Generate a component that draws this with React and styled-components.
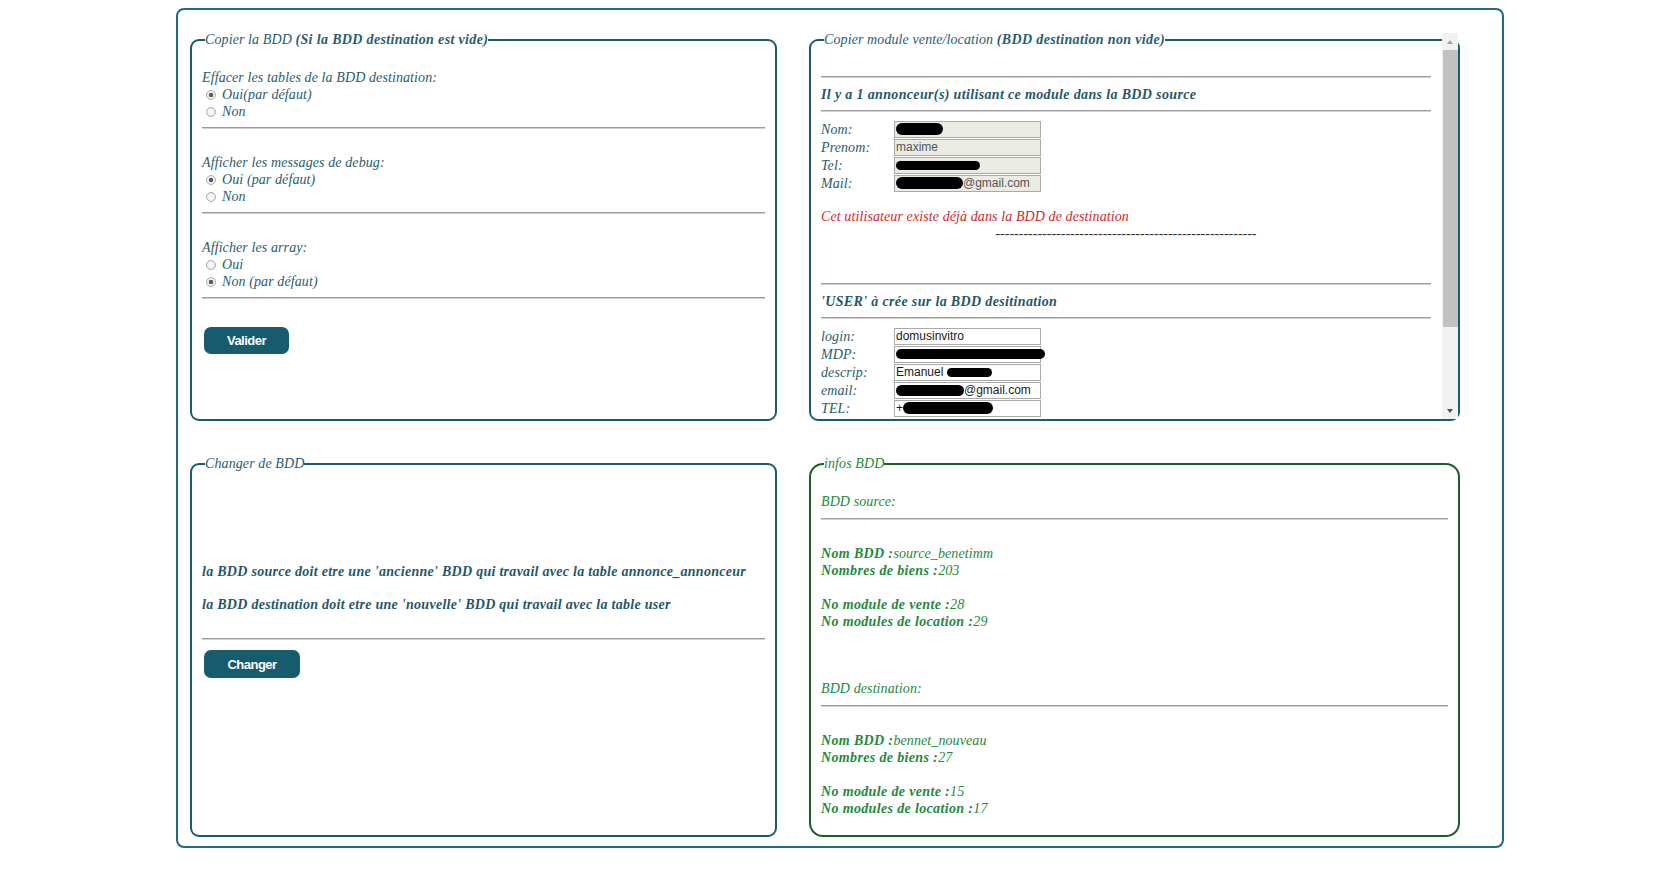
import styled, { createGlobalStyle } from "styled-components";

const GlobalStyle = createGlobalStyle`
  body {
    margin: 8px;
    background: #fff;
    font-family: "Liberation Serif", "Times New Roman", serif;
  }
`;

const Page = styled.div`
  box-sizing: border-box;
  width: 1328px;
  height: 840px;
  margin: 0 auto;
  padding: 22px 0 0 12px;
  border: 2px solid #1f6b7a;
  border-radius: 8px;
  display: grid;
  grid-template-columns: 587px 651px;
  grid-template-rows: 389px 381px;
  column-gap: 32px;
  row-gap: 35px;
`;

const Panel = styled.fieldset`
  box-sizing: border-box;
  min-width: 0;
  margin: 0;
  padding: ${(p) => (p.$flush ? "0 0 0 10px" : "21px 10px 0")};
  border: 2px solid ${(p) => (p.$green ? "#1c5e2a" : "#175d6e")};
  border-radius: ${(p) => (p.$green ? "14px" : "9px")};
  color: ${(p) => (p.$green ? "#22893c" : "#2a5d6b")};
  font: italic 14px/17px "Liberation Serif", "Times New Roman", serif;
  letter-spacing: 0.1px;

  b {
    font-weight: bold;
    letter-spacing: 0.35px;
  }
`;

const Legend = styled.legend`
  margin-left: 3px;
  padding: 0;
  line-height: 16px;
`;

/* scrolled box of the "Copier module" panel, with its classic scrollbar */
const Viewport = styled.div`
  display: flex;
  height: 386px;
  margin: -15px 0 0 -10px;
`;

const ScrollContent = styled.div`
  flex: 1;
  min-width: 0;
  overflow: hidden;
  padding: 0 11px 0 10px;
`;

const ScrollTrack = styled.div`
  flex: none;
  width: 16px;
  display: flex;
  flex-direction: column;
  background: #f1f1f1;
`;

const ScrollArrow = styled.div`
  flex: none;
  height: 17px;
  display: flex;
  align-items: center;
  justify-content: center;

  &::before {
    content: "";
    border-left: 3.5px solid transparent;
    border-right: 3.5px solid transparent;
    ${(p) =>
      p.$down
        ? "border-top: 4px solid #505050;"
        : "border-bottom: 4px solid #a3a3a3;"}
  }
`;

const ScrollThumb = styled.div`
  flex: none;
  height: 277px;
  margin-left: 1px;
  background: #c1c1c1;
`;

const ScrollGap = styled.div`
  flex: 1;
`;

const Rule = styled.hr`
  height: 0;
  margin: ${(p) => p.$top ?? 7}px 0 ${(p) => p.$bottom ?? 8}px;
  border: 0;
  border-top: 1px solid #9b9b9b;
  border-bottom: 1px solid #d2d2d2;
`;

const Line = styled.div`
  margin-top: ${(p) => p.$top ?? 0}px;
  line-height: 17px;
  white-space: nowrap;
`;

const Heading = styled(Line)`
  font-weight: bold;
  letter-spacing: 0.35px;
  color: #1f5767;
`;

const Note = styled(Heading)`
  letter-spacing: 0.28px;
`;

const Alert = styled(Line)`
  color: #d0282b;
`;

const Dashes = styled(Line)`
  text-align: center;
  font-style: normal;
  letter-spacing: 0;
  color: #333;
`;

const Choice = styled.label`
  display: flex;
  align-items: center;
  height: 17px;
`;

const Radio = styled.input.attrs({ type: "radio" })`
  appearance: none;
  box-sizing: border-box;
  width: 10px;
  height: 10px;
  margin: 0 6px 0 4px;
  border: 1px solid #adadad;
  border-radius: 50%;
  background: radial-gradient(circle, #fdfdfd 0, #e4e4e4 100%);

  &:checked {
    background: radial-gradient(circle, #5c5c5c 0 2px, #f4f4f4 2.6px, #e4e4e4 100%);
  }
`;

const Button = styled.button`
  display: block;
  width: ${(p) => p.$w}px;
  height: ${(p) => p.$h}px;
  margin: ${(p) => p.$top ?? 0}px 0 0 2px;
  padding: 0;
  border: none;
  border-radius: 7px;
  background: #175b6f;
  color: #fff;
  font: bold 13px "Liberation Sans", Arial, sans-serif;
  letter-spacing: -0.5px;
  cursor: pointer;
`;

const FieldGrid = styled.div`
  display: grid;
  grid-template-columns: 73px 147px;
  grid-auto-rows: 18px;
  align-items: center;
`;

const Field = styled.div`
  box-sizing: border-box;
  height: 17px;
  padding: 0 1px;
  display: flex;
  align-items: center;
  border: 1px solid #a9a9a9;
  background: ${(p) => (p.$disabled ? "#ebebe4" : "#fff")};
  color: ${(p) => (p.$disabled ? "#545454" : "#1a1a1a")};
  font: normal 12px/15px "Liberation Sans", Arial, sans-serif;
  letter-spacing: 0;
  white-space: pre;
`;

const Blot = styled.span`
  flex: none;
  display: inline-block;
  width: ${(p) => p.$w}px;
  height: ${(p) => p.$h}px;
  border-radius: 999px;
  background: #000;
`;

const options = [
  { title: "Effacer les tables de la BDD destination:", name: "effacer", choices: ["Oui(par défaut)", "Non"], checked: 0 },
  { title: "Afficher les messages de debug:", name: "debug", choices: ["Oui (par défaut)", "Non"], checked: 0 },
  { title: "Afficher les array:", name: "array", choices: ["Oui", "Non (par défaut)"], checked: 1 },
];

const sourceFields = [
  { label: "Nom:", blot: [47, 12] },
  { label: "Prenom:", text: "maxime" },
  { label: "Tel:", blot: [84, 9] },
  { label: "Mail:", blot: [67, 12], text: "@gmail.com" },
];

const destFields = [
  { label: "login:", text: "domusinvitro" },
  { label: "MDP:", blot: [149, 10] },
  { label: "descrip:", text: "Emanuel ", blot: [45, 9], blotAfter: true },
  { label: "email:", blot: [68, 11], text: "@gmail.com" },
  { label: "TEL:", text: "+", blot: [90, 12], blotAfter: true },
];

const Fields = ({ rows, disabled }) => (
  <FieldGrid>
    {rows.map((r) => [
      <span key={r.label}>{r.label}</span>,
      <Field key={r.label + "-field"} $disabled={disabled}>
        {r.blot && !r.blotAfter && <Blot $w={r.blot[0]} $h={r.blot[1]} />}
        {r.text}
        {r.blot && r.blotAfter && <Blot $w={r.blot[0]} $h={r.blot[1]} />}
      </Field>,
    ])}
  </FieldGrid>
);

const App = () => {
  return (
    <>
      <GlobalStyle />
      <Page>
        <Panel>
          <Legend>
            Copier la BDD <b>(Si la BDD destination est vide)</b>
          </Legend>
          {options.map((o) => (
            <div key={o.name}>
              <Line>{o.title}</Line>
              {o.choices.map((c, i) => (
                <Choice key={c}>
                  <Radio name={o.name} defaultChecked={i === o.checked} />
                  {c}
                </Choice>
              ))}
              <Rule $top={7} $bottom={25} />
            </div>
          ))}
          <Button $w={85} $h={27} $top={28}>
            Valider
          </Button>
        </Panel>

        <Panel $flush>
          <Legend>
            Copier module vente/location <b>(BDD destination non vide)</b>
          </Legend>
          <Viewport>
            <ScrollContent>
              <Rule $top={43} />
              <Heading>Il y a 1 annonceur(s) utilisant ce module dans la BDD source</Heading>
              <Rule />
              <Fields rows={sourceFields} disabled />
              <Alert $top={16}>Cet utilisateur existe déjà dans la BDD de destination</Alert>
              <Dashes>{"-".repeat(56)}</Dashes>
              <Rule $top={41} />
              <Heading>'USER' à crée sur la BDD desitination</Heading>
              <Rule />
              <Fields rows={destFields} />
            </ScrollContent>
            <ScrollTrack>
              <ScrollArrow />
              <ScrollThumb />
              <ScrollGap />
              <ScrollArrow $down />
            </ScrollTrack>
          </Viewport>
        </Panel>

        <Panel>
          <Legend>Changer de BDD</Legend>
          <Note $top={70}>
            la BDD source doit etre une 'ancienne' BDD qui travail avec la table annonce_annonceur
          </Note>
          <Note $top={16}>
            la BDD destination doit etre une 'nouvelle' BDD qui travail avec la table user
          </Note>
          <Rule $top={25} $bottom={10} />
          <Button $w={96} $h={28}>
            Changer
          </Button>
        </Panel>

        <Panel $green>
          <Legend>infos BDD</Legend>
          <Line>BDD source:</Line>
          <Rule $top={8} $bottom={25} />
          <Line><b>Nom BDD :</b>source_benetimm</Line>
          <Line><b>Nombres de biens :</b>203</Line>
          <Line $top={17}><b>No module de vente :</b>28</Line>
          <Line><b>No modules de location :</b>29</Line>
          <Line $top={50}>BDD destination:</Line>
          <Rule $top={8} $bottom={25} />
          <Line><b>Nom BDD :</b>bennet_nouveau</Line>
          <Line><b>Nombres de biens :</b>27</Line>
          <Line $top={17}><b>No module de vente :</b>15</Line>
          <Line><b>No modules de location :</b>17</Line>
        </Panel>
      </Page>
    </>
  );
};

export default App;
